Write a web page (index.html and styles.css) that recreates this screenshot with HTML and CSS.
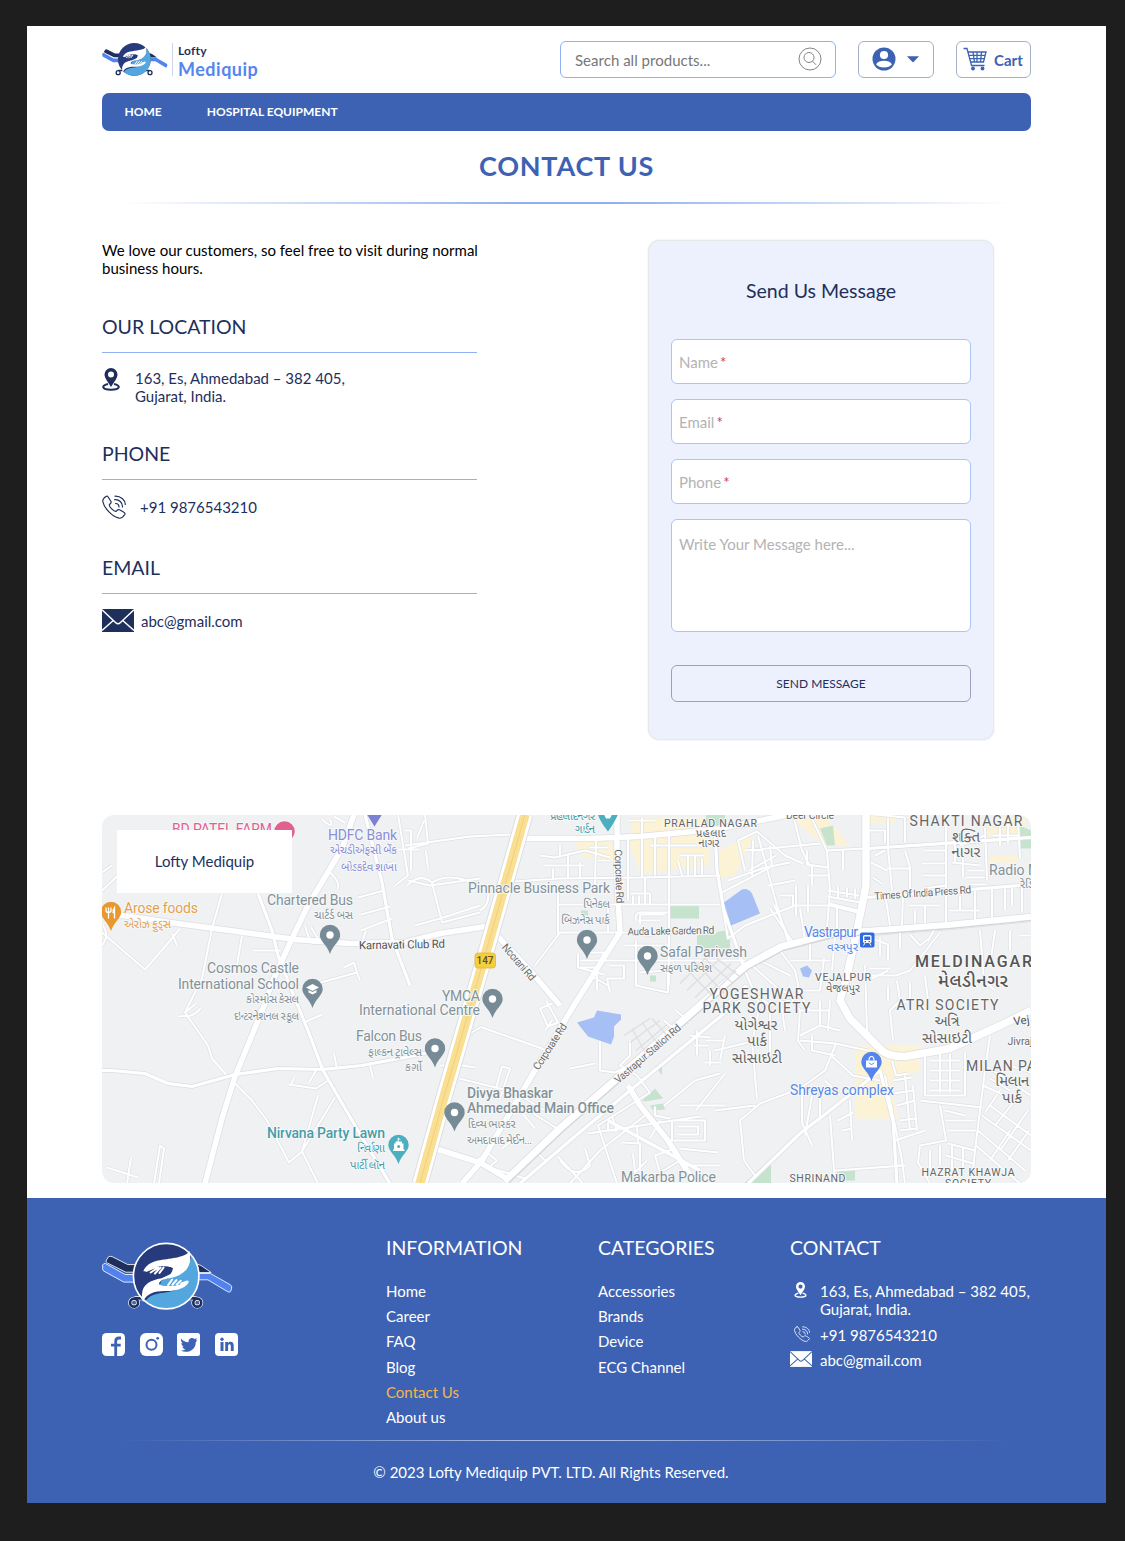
FILE: index.html
```html
<!DOCTYPE html>
<html lang="en">
<head>
<meta charset="utf-8">
<title>Lofty Mediquip – Contact Us</title>
<link rel="stylesheet" href="styles.css">
</head>
<body>
<svg class="sprite" aria-hidden="true">
  <symbol id="logo" viewBox="34 49 396 208">
    <g class="logo-line" stroke-width="2.5" stroke-linejoin="round">
      <path fill="#1e2f5c" d="M46 106L53 94Q58 90 65 93L112 117H140V140H106L50 112Q46 110 46 106ZM318 114L334 120 364 141H318Z"/>
      <path fill="#5083f0" d="M36 131V118Q40 110 47 115L104 147H136V170H100L40 137Q36 135 36 131ZM318 144H362L422 178Q427 182 426 188L423 198Q420 202 414 199L354 163H318Z"/>
    </g>
    <g fill="none" class="logo-line" stroke-width="12"><circle cx="131" cy="232" r="12"/><circle cx="322" cy="232" r="12"/><path d="M132 219H170M285 219H320"/></g>
    <g fill="none" stroke="#1e2f5c" stroke-width="8"><circle cx="131" cy="232" r="12"/><circle cx="322" cy="232" r="12"/><path d="M132 219H170M285 219H320"/></g>
    <circle cx="228" cy="152" r="98" fill="#263a7c"/>
    <path fill="#54a6de" d="M304 90A98 98 0 0 1 166 228C180 200 220 205 255 195L210 170 240 150C275 145 300 125 304 90Z"/>
    <path fill="#fff" d="M298 76C285 98 235 98 203 105C180 110 165 122 159 137C170 138 180 135 190 124H230C248 122 252 134 240 146L214 158C175 165 145 180 158 231C168 205 190 197 225 197C262 198 292 185 297 168C280 166 270 180 240 182L208 178C202 168 220 160 238 158C285 150 310 120 298 76Z"/>
    <path fill="#263a7c" d="M168 138C183 123 225 116 249 128L240 144 231 137 228 151 219 142 172 143Z"/>
    <path fill="#54a6de" d="M290 167C272 181 224 186 208 178L218 162 224 172 231 158 246 168 284 162Z"/>
    <g fill="none" stroke="#fff" stroke-width="6" stroke-linecap="round"><path d="M168 136L198 124M181 141L204 126M194 144L211 126M208 142L220 126M234 179L246 162M247 178L259 164M260 177L272 166M274 174L292 168"/></g>
    <circle class="logo-line" cx="228" cy="152" r="99" fill="none" stroke-width="5"/>
  </symbol>
  <symbol id="pin" viewBox="0 0 18 23"><path fill="currentColor" fill-rule="evenodd" d="M9 0A6.5 6.5 0 0 1 15.5 6.5C15.5 10 12 14 9 19C6 14 2.500 10 2.500 6.500A6.500 6.500 0 0 1 9 0ZM9 3.600A3 3 0 1 0 9 9.600A3 3 0 1 0 9 3.600Z"/><path fill="none" stroke="currentColor" stroke-width="2" d="M6 16C-1 17.500-.5 21.700 9 21.700S19 17.500 12 16"/></symbol>
  <symbol id="phone" viewBox="0 0 24 24"><g fill="none" stroke="currentColor" stroke-width="1.200" stroke-linecap="round" stroke-linejoin="round"><path d="M4.500 1.200C2 2.500.5 4 .8 6.500C2 13 10 21.500 17 23.200C19.500 23.500 21.500 21.500 22.800 19.500C23.600 18.200 22.500 17.400 17.500 14.800C15.500 14 15.200 15.500 14 16.400C12 17 6.800 11.500 7.400 9.700C8.200 8.500 9.700 8.200 9 6.500L6 1.700Q5.500.8 4.500 1.200Z"/><path d="M13.500 8.500A3.500 3.500 0 0 1 17 12M12.700 4.700A7 7 0 0 1 20.500 12M13 1.200C19 1 23.500 5.500 23.300 9.500"/></g></symbol>
  <symbol id="mail" viewBox="0 0 32 23"><path fill="currentColor" d="M0 0H32V23H0Z"/><path class="mail-line" fill="none" stroke-width="1.500" d="M0 .8L13.500 13.500Q16 16 18.500 13.500L32 .8M0 21.500L11 11.800M32 21.500L21 11.800"/></symbol>
  <symbol id="place" viewBox="-10.500 -10.500 21 30"><path fill="currentColor" d="M0-10.200A10.200 10.200 0 0 1 10.200 0C10.200 6 3 10 0 19C-3 10-10.200 6-10.200 0A10.200 10.200 0 0 1 0-10.200Z"/></symbol>
</svg>

<div class="page">
  <header class="topbar">
    <a class="brand"><svg class="brand-mark"><use href="#logo"/></svg><span class="brand-name"><small>Lofty</small><b>Mediquip</b></span></a>
    <div class="search"><span>Search all products...</span>
      <svg width="24" height="24" viewBox="0 0 24 24" fill="none" stroke="#777" stroke-width=".9"><circle cx="12" cy="12" r="11"/><circle cx="11" cy="10.500" r="5"/><path d="M14.500 14.200L18 17.800"/></svg>
    </div>
    <div class="account">
      <svg width="24" height="24" viewBox="0 0 24 24"><circle cx="12" cy="12" r="11.500" fill="#3d62b3"/><circle cx="12" cy="8" r="4.100" fill="#fff"/><path fill="#fff" d="M4 17.300C5.500 14.800 8.500 13.800 12 13.800S18.500 14.800 20 17.300C18 19.600 15.500 20.600 12 20.600S6 19.600 4 17.300Z"/></svg>
      <svg width="12" height="7" viewBox="0 0 12 7"><path fill="#3d62b3" d="M0 .3H12L6.800 5.800Q6 6.500 5.200 5.800Z"/></svg>
    </div>
    <div class="cart">
      <svg width="25" height="25" viewBox="0 0 25 25" fill="none" stroke="#3d62b3" stroke-width="1.300"><path d="M.5 1.500H4L8.500 18.500H21.500M5 5H23L20.500 15H7.600M6 8.300H22.200M6.800 11.700H21.400M10 5L11.500 15M14 5V15M18.500 5L17.500 15"/><circle cx="10" cy="21.500" r="1.300" fill="#3d62b3"/><circle cx="19.500" cy="21.500" r="1.300" fill="#3d62b3"/></svg>
      <b>Cart</b>
    </div>
  </header>
  <nav class="nav"><a>HOME</a><a>HOSPITAL EQUIPMENT</a></nav>
  <h1>CONTACT US</h1>
  <div class="fade"></div>

  <main class="contact">
    <section class="details">
      <p class="intro">We love our customers, so feel free to visit during normal<br>business hours.</p>
      <h2>OUR LOCATION</h2>
      <div class="item place"><svg width="18" height="23"><use href="#pin"/></svg><p>163, Es, Ahmedabad – 382 405,<br>Gujarat, India.</p></div>
      <h2>PHONE</h2>
      <div class="item tel"><svg width="24" height="24"><use href="#phone"/></svg><p>+91 9876543210</p></div>
      <h2>EMAIL</h2>
      <div class="item mail"><svg width="32" height="23"><use href="#mail"/></svg><p>abc@gmail.com</p></div>
    </section>
    <form class="card">
      <h3>Send Us Message</h3>
      <div class="field">Name<i>*</i></div>
      <div class="field">Email<i>*</i></div>
      <div class="field">Phone<i>*</i></div>
      <div class="field message">Write Your Message here...</div>
      <button type="button">SEND MESSAGE</button>
    </form>
  </main>

  <section class="map">
    <svg viewBox="102 814.500 929 368.500" width="929" height="368.500">
      <defs>
        <g id="minor">
          <path d="M102 890L118 875M102 945Q110 935 103 925M102 932L145 969L166 945L180 928M172 933L177 945M222 893L212 928L202 978L185 1012L208 1045L212 1058L226 1074M185 1012L196 1003M178 1016L191 1015Q198 1012 201 1007M242 935L236 970M254 950H280M235 1083L252 1100L267 1120L289 1162L302 1151L335 1097M318 1095L302 1151L318 1183M107 1167L138 1177M131 1157L127 1183M289 1084L316 1088L328 1080M294 1077L291 1084M316 1070L309 1082M334 1053L337 1069M370 1065L373 1078M306 1021L322 1014M311 927L318 938Q312 952 305 925M366 930L362 942"/>
          <path d="M310 985L357 972L354 962L344 967M357 972L360 980M365 870L395 862M358 897L384 890M361 914L390 906M361 930L392 918M322 819Q335 830 330 819M334 816L345 822M328 870Q340 880 338 888M390 849H418M398 814L408 875L395 885M408 848L428 843L425 814M102 872L112 865M154 1183L160 1145L164 1148L159 1183M405 845L470 836L512 834M426 850L428 868M405 830H411V870M417 838L424 820M407 885Q420 872 432 882L442 922L480 912M431 883Q450 868 488 890Q490 905 480 910M415 925L440 918L480 905M408 880L430 885L480 878"/>
          <path d="M513 881L560 878L642 877L720 875M558 904H720M558 930V904M535 965L560 932H716M558 885V933M608 904V932M595 885L596 838M580 878V862M568 878V855M553 878V868M543 865H585M540 855L555 857L585 850L610 857M560 845V856M590 847H608M598 860H610M628 835V900M642 817V877M628 820H655M645 877V900M655 833V875M669 830V985M650 845H710M678 860L682 875M688 856V875M695 856V875M702 858V875M680 855H704M631 893H650V904M633 904V895M639 904V895M645 904V893M695 845L720 842M638 920H660M636 920Q634 910 645 912H668M640 924V914H665M638 930L645 935L668 932M580 960H600L604 952H590M597 990V967H580M578 953V967L604 974M610 965L624 965V978H607L610 992M594 977L608 985M600 960H745M625 945L670 945M636 940V985L668 992V965M640 972L665 970M482 1027L545 1049M459 1078L520 1093M458 1040L482 1026M440 1065H468M463 1065L475 1067M500 1098L510 1068L502 1066L494 1095M513 1100L560 1130M520 1095L545 1110M435 1150L525 1178M520 1110L535 1128M600 1040V1070L615 1072L640 1060M570 1068L595 1063M570 1183L600 1150L645 1115M552 1020L545 1030M546 1000L558 1022L548 1026L540 1008L552 1003M487 1152L497 1160L490 1166L477 1160Z"/>
          <path d="M630 1040V1055L620 1065L637 1075L650 1092M598 1125L650 1092M598 1125L617 1183M588 1133L700 1116M612 1116L617 1130H608V1122M622 1142L640 1143V1170M633 1153L635 1172L647 1160M637 1125L638 1143M655 1155L675 1148L680 1160L660 1172L655 1155M680 1148L718 1152M685 1165H720M660 1120L650 1138M680 1105H725M655 1106V1115L670 1118M672 1120H705V1140H672ZM678 1126H698V1134H678M560 1160Q575 1180 590 1165L585 1148M558 1156L583 1183M535 1150L545 1160M502 1148L515 1138M696 1110L725 1073M664 1105L695 1080L720 1073M664 1020L680 1033M676 1010L690 1022M690 1035L710 1037M695 1045H708M697 1030V1055M705 1062H721M710 1050V1065M706 1040H724M725 1035L720 1060"/>
          <path d="M720 893L770 867M722 903L728 938L745 925L795 905L830 905L858 912M728 880L765 867L790 862M745 850L820 843M745 870L738 840L757 831L785 855L803 863M758 835L777 905L788 941M774 904L790 940M749 870L776 855M768 885L795 880M753 840L752 875M770 845L772 867M793 814L802 850L810 866M810 814L827 850L830 890L826 940M827 850L864 848M807 850V864L828 867M808 875H828M812 865V885M843 849V870M780 895H793V908M796 885V915M808 885V912M770 908L795 945M800 908L805 940M828 896L860 902M828 890L859 895M829 903L858 910M838 886V897M847 887V897M855 888V898M837 905V934M868 848L948 843L1031 837M875 814L905 817V842M868 830H885V842M888 817V848L892 890M875 855L885 850M871 862L887 870M873 877L882 883M905 850L910 867V893M887 868H910M946 825V925M924 850H945M922 863H945M923 875H945M923 888L945 885M955 840V863M963 840V877M952 862L980 865M968 870H984M966 877H985M968 884H986M960 845L985 835M985 827L987 880M993 825H1018M993 835H1018M1000 820V845M1008 818V843M1018 820L1020 858"/>
          <path d="M865 965L867 1030L878 1045M870 975H896L910 970L940 932M870 968H890M872 978L888 970M960 895V910M950 910H980M975 890V920M992 888V920M1005 888V910M1012 887V905M1022 885V912M885 893L890 925M903 893L902 925M910 905H940M915 910V923M925 905V923M872 938L888 944V960M880 937V955M900 932V948M910 934L920 945L930 937M935 928L928 940M980 930L984 980L995 990M995 930L990 965M1010 930V950M1020 935H1031M780 950L795 970L800 993L810 1010M752 965L780 990L800 996M760 960L790 975M790 960H830M810 940V960M824 958L820 990H800M835 935L832 970M720 1010L745 985L770 1005L790 1000M745 970L760 1005L752 1042L757 1098M770 1000V1060M780 995L785 1030M788 993L800 1010L798 1040L805 1050M800 1010H830M820 1000V1025M830 1000L828 1030M800 1035L820 1025L840 1030M812 1035V1050L835 1055M870 1040L885 1050M888 985V1000M897 980L900 1000L890 1010L893 1040M910 982V1000L895 1005M925 975L928 1000"/>
          <path d="M752 1041L715 1050M836 1043L825 1070L800 1088L760 1103L740 1120L744 1160L755 1175M715 1110L755 1105M800 1040L835 1043L868 1050M831 1055L853 1075L880 1080M802 1088V1122L812 1145M812 1095L805 1135M820 1090V1120M825 1080L840 1095M830 1115L835 1183M885 1075L902 1160L905 1183M835 1170L905 1165M850 1100L852 1140M838 1120L853 1112M842 1130L852 1128M892 1060L896 1075L908 1073M893 1080L912 1077M893 1093L913 1090M897 1105L915 1100M900 1120L915 1118M900 1130L917 1128M905 1075L910 1130M913 1085L917 1130M895 1140L925 1130M925 1050V1095H965V1052M930 1060H960M930 1070H960M930 1080H960M930 1090H960M940 1053V1092M950 1053V1092M990 1035L985 1070L980 1110L975 1150L972 1180M985 1065L1031 1095M920 1100L982 1107M940 1105L946 1140L920 1145L918 1162L930 1183M945 1110L965 1115M946 1120H975M948 1130H976M990 1105L1031 1135M982 1115L1031 1150M978 1130L1025 1170M976 1145L1020 1183M1000 1090L985 1112M1015 1100L995 1125M1028 1110L1000 1150M1029 1130L1008 1160M990 1160L1010 1130M948 1143L975 1150M946 1155L973 1163M930 1150V1170M940 1145V1165M952 1143V1170M963 1147V1170M983 1085L1005 1095M990 1078L1010 1090M1010 1065L1031 1072"/>
        </g>
        <g id="streets">
          <path d="M258 893L272 930L278 955L295 998L308 1030L323 1070L362 1137L390 1183M365 814L374 850L382 882L392 938L410 985M102 1070H112L145 1073L168 1083L192 1086L235 1074L278 1068L322 1069L362 1065L415 1055L445 1048M608 1120L700 1170M715 828L717 870L724 910L745 970M866 897L920 893L1031 884M748 1183L800 1133L830 1110L880 1070M880 1070L893 1120L897 1183M1031 837L868 848M520 1183L570 1140L630 1090L740 1000"/>
        </g>
        <g id="major">
          <path d="M102 912L170 922L230 930L295 939L350 943L405 942L440 933L486 926M354 814L342 848L308 905L292 938L272 982L265 1003L235 1076L222 1118L205 1183M524 838H590L640 836L715 829L790 814M617 814V880L620 932L575 1003L520 1095L482 1160L462 1183M498 936L530 970L560 1005M436 1148L480 1162L510 1180M628 1085L640 1105L668 1140L695 1183"/>
        </g>
        <g id="main"><path d="M505 1181L560 1128L640 1058L700 1005L745 966L780 947L830 934L870 931L950 925L1031 917"/><path d="M866 814V885L857 930L847 975L840 1000L850 1018L880 1048Q886 1056 905 1056L950 1048L1000 1025L1031 1010"/></g>
      </defs>
      <path fill="#f0f1f3" d="M102 814H1031V1183H102Z"/>
      <path fill="#fcf3d6" d="M575 842L610 840 615 860 582 856ZM632 817H710V865L640 873 630 845ZM720 850L755 832 735 875 718 878ZM790 816H825L850 845H825ZM867 814H895V822H867ZM985 818H1025V835H988ZM990 855H1018V862H990ZM855 1045L920 1045V1070L890 1080 898 1118H855Z"/>
      <path fill="#c5e3cd" d="M706 814H725V828H706ZM820 828L833 825 835 845 827 845ZM1020 825L1031 830V848H1020ZM670 905H699V918H670ZM697 935L725 930V948H697ZM581 910H588V915H581ZM650 975H656V981H650ZM660 1065H662V1075L655 1065ZM642 1100L655 1088 663 1098 645 1101ZM650 1105L663 1103 665 1109 653 1110ZM744 1183L771 1158V1183ZM837 1170H855V1180L837 1180ZM715 933H730V948H715Z"/>
      <use href="#minor" class="minor-edge"/><use href="#streets" class="street-edge"/><use href="#major" class="major-edge"/><use href="#main" class="main-edge"/>
      <use href="#minor" class="minor"/><use href="#streets" class="street"/><use href="#major" class="major"/><use href="#main" class="main-road"/>
      <path fill="#a6bff5" d="M724 902L742 889Q748 887 752 893L760 913 731 925ZM577 1022L594 1017 597 1010 621 1014V1019L614 1026V1036L611 1044 588 1036ZM800 968L807 965 812 970 809 977 803 976Z"/>
      <g class="hatch"><path d="M680 983L705 958M687 990L719 959M695 997L731 963M703 1002L736 970M684 966L715 998M694 960L724 993M705 958L733 983M717 958L741 977M624 1035L650 1018M630 1042L660 1020M636 1050L667 1024M632 1028L645 1052M642 1022L658 1044M652 1018L668 1036"/></g>
      <path class="rail" d="M508 1183L563 1131L643 1061L703 1008L748 969L783 950L832 937L870 934L950 928L1031 920"/>
      <path class="hwy-side" d="M525 814L487 948L471 1003L443 1100L420 1183"/>
      <path class="hwy-gap" d="M525 814L487 948L471 1003L443 1100L420 1183"/>
      <path class="hwy" d="M525 814L487 948L471 1003L443 1100L420 1183"/>
      <path class="hwy-mid" d="M525 814L487 948L471 1003L443 1100L420 1183"/>

      <g class="pins">
        <use href="#place" x="274" y="820.500" width="21" height="30" color="#e0608f"/>
        <path fill="#7b82d4" d="M367 814H382L374.500 826Z"/>
        <path fill="#4cafbf" d="M598 814H618Q615 821 608 831Q600 821 598 814Z"/><path fill="#fff" d="M604 814H612L610 818H606Z"/>
        <use href="#place" x="100.500" y="901" width="21" height="30" color="#e8982f"/>
        <g class="gray"><use href="#place" x="319.500" y="924" width="21" height="30"/><use href="#place" x="302" y="978" width="21" height="30"/><use href="#place" x="482" y="988" width="21" height="30"/><use href="#place" x="424.500" y="1037.500" width="21" height="30"/><use href="#place" x="444" y="1101.500" width="21" height="30"/><use href="#place" x="576.500" y="929" width="21" height="30"/><use href="#place" x="637" y="945" width="21" height="30"/></g>
        <g fill="#fff"><circle cx="330" cy="934.500" r="3.700"/><circle cx="492.500" cy="998.500" r="3.700"/><circle cx="435" cy="1048" r="3.700"/><circle cx="454.500" cy="1112" r="3.700"/><circle cx="587" cy="939.500" r="3.700"/><circle cx="647.500" cy="955.500" r="3.700"/><path d="M306 987L312.500 983.500 319 987 312.500 990.500ZM308.500 989.500L312.500 991.500 316.500 989.500V992L312.500 994 308.500 992Z"/></g>
        <path stroke="#fff" fill="none" stroke-width="1.300" d="M106 907V910Q106 912 108.500 912T111 910V907M108.500 907V918M114.500 918V907Q112.500 910 113 912H114.500"/>
        <use href="#place" x="388" y="1134" width="21" height="30" color="#4cafbf"/><path fill="#fff" d="M397.700 1137L401 1139H398.700V1141H402V1143H403.500V1149H404.500V1150.500H393V1149H394V1143H395.500V1141H397.700Z"/><circle cx="398.700" cy="1146" r="1.500" fill="#4cafbf"/>
        <use href="#place" x="861" y="1051" width="21" height="30" color="#5584ef"/><path fill="#fff" d="M866 1060H877V1067H866Z"/><path fill="none" stroke="#fff" stroke-width="1.200" d="M869 1060Q869 1056 871.500 1056T874 1060"/><path fill="none" stroke="#5584ef" d="M869 1062Q871.500 1066 874 1062"/>
        <rect x="860" y="932" width="14.500" height="15" rx="2" fill="#2f6ae0"/><rect x="863" y="934.500" width="8.500" height="8" rx="1.500" fill="#fff"/><path fill="#2f6ae0" d="M864.300 936H870.200V939.500H864.300ZM864.500 940.500H866V941.700H864.500ZM868.500 940.500H870V941.700H868.500Z"/><path stroke="#fff" d="M865 942.500L863.500 945M869.500 942.500L871 945"/>
        <rect x="475" y="952.500" width="20.500" height="15" rx="3" fill="#f4ce3e" stroke="#e5b92a" stroke-width=".8"/>
      </g>

      <g class="labels">
        <g fill="#e0608f"><text x="172" y="833" textLength="100">BD PATEL FARM</text></g>
        <g fill="#8a8ed6" text-anchor="end"><text x="397" y="839" textLength="69">HDFC Bank</text><text class="gu" x="397" y="853.500" textLength="67">એચડીએફસી બેંક</text><text class="gu" x="397" y="870" textLength="56">બોડકદેવ શાખા</text></g>
        <g fill="#e5a04c"><text x="124" y="912" textLength="74">Arose foods</text><text class="gu" x="124" y="927" textLength="47">એરોઝ ફુડ્સ</text></g>
        <g fill="#849298" text-anchor="end">
          <text x="353" y="904" textLength="86">Chartered Bus</text><text class="gu" x="353" y="918" textLength="39">ચાર્ટર્ડ બસ</text>
          <text x="299" y="972.500" textLength="92">Cosmos Castle</text><text x="299" y="988" textLength="121">International School</text><text class="gu" x="299" y="1002" textLength="53">કોસ્મોસ કેસલ</text><text class="gu" x="299" y="1019" textLength="65">ઇન્ટરનેશનલ સ્કૂલ</text>
          <text x="480" y="1000" textLength="38">YMCA</text><text x="480" y="1014.500" textLength="121">International Centre</text>
          <text x="422" y="1040" textLength="66">Falcon Bus</text><text class="gu" x="422" y="1055" textLength="54">ફાલ્કન ટ્રાવેલ્સ</text><text class="gu" x="422" y="1070" textLength="17">કાર્ગો</text>
          <text x="610" y="892" textLength="142">Pinnacle Business Park</text><text class="gu" x="610" y="907" textLength="27">પિનેકલ</text><text class="gu" x="610" y="923" textLength="49">બિઝનેસ પાર્ક</text>
        </g>
        <g fill="#849298">
          <g class="medium"><text x="467" y="1097" textLength="86">Divya Bhaskar</text><text x="467" y="1112" textLength="147">Ahmedabad Main Office</text></g><text class="gu" x="467" y="1127" textLength="48">દિવ્ય ભાસ્કર</text><text class="gu" x="467" y="1143" textLength="65">અમદાવાદ મેઈન...</text>
          <text x="660" y="956" textLength="87">Safal Parivesh</text><text class="gu" x="660" y="971" textLength="52">સફળ પરિવેશ</text><text x="621" y="1181" textLength="95">Makarba Police</text><text x="989" y="874">Radio M</text><text class="gu" x="1020" y="887">રેડિ</text>
        </g>
        <g fill="#469da8" text-anchor="end"><text class="medium" x="385" y="1137" textLength="118">Nirvana Party Lawn</text><text class="gu" x="385" y="1151" textLength="28">નિર્વાણા</text><text class="gu" x="385" y="1168" textLength="35">પાર્ટી લૉન</text><text class="gu" x="595" y="819" textLength="45">પ્રહલાદનગર</text><text class="gu" x="595" y="832" textLength="20">ગાર્ડન</text></g>
        <g fill="#5b88e5"><text x="804" y="936" textLength="54">Vastrapur</text><text class="gu" x="858" y="950" text-anchor="end" textLength="31">વસ્ત્રપુર</text><text x="790" y="1094" textLength="104">Shreyas complex</text></g>
        <g class="road" text-anchor="middle"><text transform="translate(402 948) rotate(-1)" textLength="86">Karnavati Club Rd</text>
          <g class="small"><text transform="translate(516 964) rotate(49)" textLength="45">Noorani Rd</text><text transform="translate(553 1048) rotate(-57)" textLength="53">Corporate Rd</text><text transform="translate(650 1056) rotate(-41)" textLength="84">Vastrapur Station Rd</text><text transform="translate(615.500 876) rotate(88)" textLength="54">Corporate Rd</text><text transform="translate(671 934) rotate(-1)" textLength="87">Auda Lake Garden Rd</text><text transform="translate(923 896) rotate(-4)" textLength="97">Times Of India Press Rd</text><text x="810" y="818.500" textLength="48">Deer Circle</text><text x="1020" y="1044">Jivraj</text></g>
          <text x="1022" y="1024" transform="rotate(-8 1022 1024)">Vej</text>
        </g>
        <g class="area" text-anchor="middle">
          <g class="s10"><text x="710.500" y="826" textLength="93">PRAHLAD NAGAR</text><text class="gu" x="711" y="836" textLength="30">પ્રહલાદ</text><text class="gu" x="709" y="846" textLength="21">નાગર</text><text x="843" y="980" textLength="56">VEJALPUR</text><text class="gu" x="843" y="991" textLength="34">વેજલપુર</text><text x="817.500" y="1181" textLength="56">SHRINAND</text><text x="968" y="1175.500" textLength="93">HAZRAT KHAWJA</text><text x="968" y="1186" textLength="46">SOCIETY</text></g>
          <g class="s13"><text x="966" y="825" textLength="113">SHAKTI NAGAR</text><text class="gu2" x="966" y="841" textLength="28">શક્તિ</text><text class="gu2" x="966" y="856" textLength="29">નાગર</text><text x="756.500" y="998" textLength="94">YOGESHWAR</text><text x="756.500" y="1012" textLength="108">PARK SOCIETY</text><text class="gu2" x="756" y="1029" textLength="43">યોગેશ્વર</text><text class="gu2" x="757" y="1045" textLength="20">પાર્ક</text><text class="gu2" x="757" y="1062" textLength="50">સોસાઇટી</text><text x="947.500" y="1009" textLength="102">ATRI SOCIETY</text><text class="gu2" x="947" y="1025" textLength="25">અત્રિ</text><text class="gu2" x="947" y="1042" textLength="50">સોસાઇટી</text><text x="966" y="1070" text-anchor="start" textLength="70">MILAN PA</text><text class="gu2" x="1012" y="1085" textLength="34">મિલાન</text><text class="gu2" x="1012" y="1102" textLength="20">પાર્ક</text></g>
          <g class="s15"><text x="973.500" y="966" textLength="117">MELDINAGAR</text><text class="gu3" x="973" y="986" textLength="70">મેલડીનગર</text></g>
        </g>
        <text class="shield" x="485" y="963.500" text-anchor="middle">147</text>
      </g>
    </svg>
    <div class="map-card">Lofty Mediquip</div>
  </section>

  <footer class="footer">
    <div class="columns">
      <div class="social">
        <svg class="foot-mark"><use href="#logo"/></svg>
        <div class="icons">
          <svg viewBox="0 0 23 23"><rect width="23" height="23" rx="4.500" fill="#fff"/><path fill="none" stroke="#3d62b3" stroke-width="2.800" d="M13.700 23V8.500Q13.700 5 17 5H19M9 12.200H18.700"/></svg>
          <svg viewBox="0 0 23 23"><rect width="23" height="23" rx="6" fill="#fff"/><circle cx="11.500" cy="11.700" r="5" fill="none" stroke="#3d62b3" stroke-width="2"/><circle cx="17.700" cy="5.300" r="1.400" fill="#3d62b3"/></svg>
          <svg viewBox="0 0 23 23"><rect width="23" height="23" rx="2.500" fill="#fff"/><path fill="#3d62b3" d="M4 5.500Q7.500 9.500 11.500 9.300C11 5.500 15 3.700 17.500 6L20 5.200 18.800 7.500 20.500 7.200 18.700 9.300C19 17 10.500 21.200 3.700 17.500Q7 17.600 8.300 16.200Q6 15.800 5.200 13.700H6.700Q4.200 12.500 4.200 10L5.600 10.400Q3.300 8.300 4 5.500Z"/></svg>
          <svg viewBox="0 0 23 23"><rect width="23" height="23" rx="4" fill="#fff"/><g fill="#3d62b3"><circle cx="7" cy="6.300" r="1.700"/><path d="M5.500 9H8.500V18H5.500ZM10.200 9H13V10.300C14.500 8 18.700 8.300 18.700 12.500V18H15.800V13.200C15.800 10.700 13.100 10.800 13.100 13.200V18H10.200Z"/></g></svg>
        </div>
      </div>
      <div class="links info"><h4>INFORMATION</h4><a>Home</a><a>Career</a><a>FAQ</a><a>Blog</a><a class="current">Contact Us</a><a>About us</a></div>
      <div class="links cats"><h4>CATEGORIES</h4><a>Accessories</a><a>Brands</a><a>Device</a><a>ECG Channel</a></div>
      <div class="links reach"><h4>CONTACT</h4>
        <div class="reach-row"><svg width="13" height="16"><use href="#pin"/></svg><p>163, Es, Ahmedabad – 382 405,<br>Gujarat, India.</p></div>
        <div class="reach-row"><svg width="16" height="16"><use href="#phone"/></svg><p>+91 9876543210</p></div>
        <div class="reach-row"><svg width="22" height="16"><use href="#mail"/></svg><p>abc@gmail.com</p></div>
      </div>
    </div>
    <div class="fade light"></div>
    <p class="copy">© 2023 Lofty Mediquip PVT. LTD. All Rights Reserved.</p>
  </footer>
</div>
</body>
</html>
```
FILE: styles.css
```css
* { box-sizing: border-box; margin: 0; padding: 0; }
body { background: #1e1e1e; padding: 26px 19px 38px 27px; font: 15px/18px Lato, "Noto Sans", sans-serif; color: #1e2f5c; }
svg { display: block; flex: none; }
.sprite { position: absolute; width: 0; height: 0; }
.page { background: #fff; height: 1477px; display: flex; flex-direction: column; }

.topbar { display: flex; align-items: center; height: 37.5px; margin: 14.5px 75px 0; }
.brand { display: flex; align-items: center; flex: 1; }
.brand-mark { width: 66px; height: 35px; --logo-line: transparent; }
.logo-line { stroke: var(--logo-line, #fff); }
.brand-name { display: flex; flex-direction: column; border-left: 1px solid #ccd3e8; height: 33px; margin-left: 4px; padding-left: 5px; }
.brand-name small { font-size: 12px; font-weight: 700; line-height: 16px; letter-spacing: .2px; }
.brand-name b { font-size: 18px; line-height: 20px; letter-spacing: .5px; color: #5585f0; }
.search { width: 276px; height: 37.5px; border: 1px solid #8fb0f5; border-radius: 6px; display: flex; align-items: center; justify-content: space-between; padding: 0 13px 0 14px; color: #777; }
.search span { padding-top: 1px; letter-spacing: .02px; }
.account, .cart { height: 37.5px; border: 1px solid #a5aec6; border-radius: 6px; display: flex; align-items: center; }
.account { width: 76px; margin-left: 22px; padding-left: 13px; gap: 10.500px; }
.cart { width: 75px; margin-left: 22px; padding-left: 6px; gap: 6px; color: #3d62b3; }
.cart b { padding-top: 1px; }
.nav { height: 37.5px; margin: 15px 75px 0; background: #3d62b3; border-radius: 7px; display: flex; align-items: center; gap: 45px; padding: 1px 0 0 22.500px; color: #fff; font-size: 12px; font-weight: 700; }
h1 { font-size: 27px; line-height: 34px; margin-top: 18px; text-align: center; color: #3d62b3; letter-spacing: .8px; }
.fade { height: 1.5px; flex: none; margin: 19.500px 94px 0; background: linear-gradient(90deg, transparent, #8fb0ee 45%, #8fb0ee 55%, transparent); }

.contact { display: flex; justify-content: space-between; height: 500px; margin: 36.500px 112px 0 75px; }
.details { width: 377px; white-space: nowrap; }
.intro { color: #000; padding-top: 1px; height: 73.500px; letter-spacing: .01px; }
.details h2 { width: 375px; height: 39px; border-bottom: 1px solid #8fb0f5; font-size: 19.500px; line-height: 26px; font-weight: 400; }
.item { display: flex; }
.place { gap: 15px; height: 88.500px; padding-top: 15px; }
.place p { padding-top: 1px; }
.tel { gap: 14px; height: 75px; padding-top: 14.500px; align-items: flex-start; }
.tel p { padding-top: 3.500px; }
.mail { gap: 7px; padding-top: 14.500px; --mail-line: #fff; }
.mail p { padding-top: 3px; }
.mail-line { stroke: var(--mail-line, #fff); }

.card { width: 346px; background: #edf1fd; border-radius: 11px; border: 1px solid #e6e8ee; box-shadow: 0 0 2px #e4e4e4; padding: 36px 22px 0; display: flex; flex-direction: column; gap: 15px; }
.card h3 { font-size: 19.500px; line-height: 28px; font-weight: 400; text-align: center; margin-bottom: 19px; }
.field { height: 45px; flex: none; background: #fff; border: 1px solid #aac5f6; border-radius: 6px; padding: 13px 7px; color: #b3b3b3; }
.field i { font-style: normal; color: #cf3a5e; margin-left: 2px; }
.message { height: 112.500px; padding-top: 14.500px; }
.card button { height: 37.500px; margin-top: 18px; border: 1px solid #99a3bd; border-radius: 6px; background: none; font: 12px/15px Lato, sans-serif; color: #1e2f5c; }

.map { position: relative; height: 368.500px; margin: 74.500px 75px 0; border-radius: 12px; overflow: hidden; }
.map-card { position: absolute; left: 15px; top: 15px; width: 175px; height: 63px; background: #fff; display: flex; align-items: center; justify-content: center; }
.map use, .hatch, .rail, .hwy-side, .hwy-gap, .hwy, .hwy-mid { stroke-linejoin: round; }
#minor, #streets, #major, #main, .hatch, .rail, .hwy-side, .hwy-gap, .hwy, .hwy-mid { fill: none; }
.minor-edge { stroke: #dfe1e5; stroke-width: 3.400; }
.minor { stroke: #fff; stroke-width: 2; }
.street-edge { stroke: #dcdee2; stroke-width: 4.600; }
.street { stroke: #fff; stroke-width: 3.200; }
.major-edge { stroke: #dcdee2; stroke-width: 7; }
.major { stroke: #fff; stroke-width: 5.500; }
.main-edge { stroke: #dcdee2; stroke-width: 9; }
.main-road { stroke: #fff; stroke-width: 7.500; }
.hatch { stroke: #dcdee2; stroke-width: 1.200; }
.rail { stroke: #d5d7da; stroke-width: 1.300; }
.hwy-side { stroke: #dcdee2; stroke-width: 17; }
.hwy-gap { stroke: #fff; stroke-width: 15; }
.hwy { stroke: #f9df93; stroke-width: 9.500; }
.hwy-mid { stroke: #f0cc70; stroke-width: .8; }
.gray { color: #778b96; }
.labels { font-family: Roboto, "Noto Sans Gujarati", "Noto Sans", sans-serif; font-size: 14px; paint-order: stroke; stroke: #f7f8f9; stroke-width: 2px; stroke-linejoin: round; }
.medium { font-weight: 500; }
.labels .gu { font-size: 11.500px; }
.labels .gu2 { font-size: 15px; }
.labels .gu3 { font-size: 18px; }
.labels .s10 .gu { font-size: 11px; }
.road { font-size: 11.500px; fill: #555; }
.road .small { font-size: 10.500px; fill: #6b6b6b; }
.area { fill: #666; }
.s10 { font-size: 10.500px; }
.s13 { font-size: 14px; }
.s15 { font-size: 16px; font-weight: 500; fill: #555; }
.shield { font-size: 10px; font-weight: 500; fill: #5e5021; stroke: none; }

.footer { margin-top: 15px; flex: 1; background: #3d62b3; color: #fff; }
.columns { display: flex; height: 241.500px; padding: 37px 75px 0; white-space: nowrap; }
.social { width: 284px; padding-top: 7px; }
.foot-mark { width: 131px; height: 69px; }
.icons { display: flex; gap: 14.500px; margin-top: 21.500px; }
.icons svg { width: 23px; height: 23px; }
.info { width: 212px; }
.cats { width: 192px; }
.links { display: flex; flex-direction: column; }
.links h4 { font-size: 19.500px; line-height: 26px; font-weight: 400; margin-bottom: 17.500px; }
.links a { height: 25.400px; line-height: 25px; }
.links .current { color: #f5b54a; }
.reach { --mail-line: #3d62b3; }
.reach-row { display: flex; padding-top: 3.500px; margin-bottom: 4px; }
.reach-row svg { margin: 0 4px; }
.reach-row:last-child svg { margin: 0; }
.reach-row p { width: 210px; margin-left: auto; }
.reach-row svg + p { margin-left: 8px; }
.reach-row:nth-child(2) svg { margin-right: 5px; }
.reach-row:nth-child(3) svg { margin-right: 2px; }
.light { margin-top: 0; background: linear-gradient(90deg, transparent, #a9bce2 45%, #a9bce2 55%, transparent); }
.copy { text-align: center; padding: 22px 31px 0 0; }
```
